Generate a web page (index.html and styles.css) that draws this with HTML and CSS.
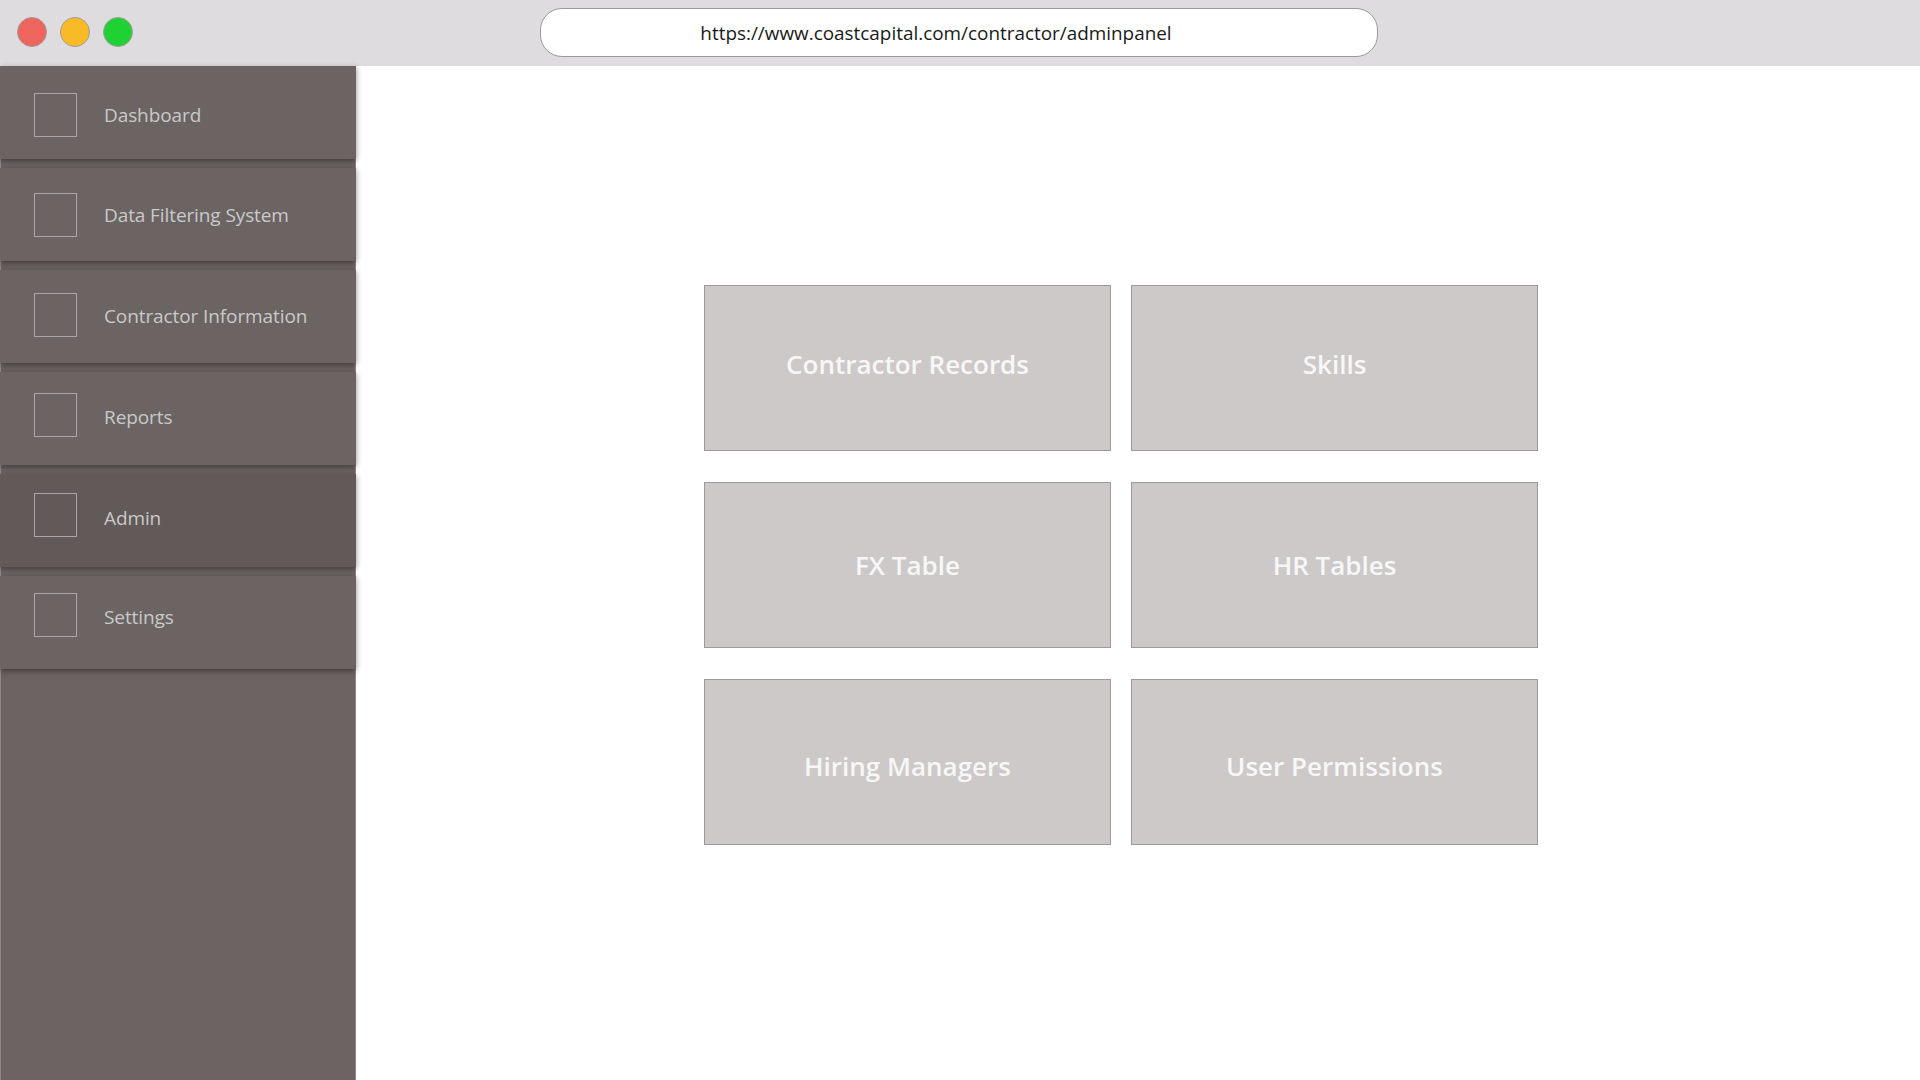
FILE: index.html
```html
<!DOCTYPE html>
<html lang="en">
<head>
<meta charset="utf-8">
<title>Admin Panel</title>
<link rel="stylesheet" href="styles.css">
</head>
<body>
<div class="window">
  <header class="topbar">
    <div class="lights">
      <span class="light red"></span>
      <span class="light yellow"></span>
      <span class="light green"></span>
    </div>
    <div class="urlbar">https://www.coastcapital.com/contractor/adminpanel</div>
  </header>
  <div class="body">
    <nav class="sidebar">
      <div class="nav-item"><span class="nav-icon"></span><span class="nav-label">Dashboard</span></div>
      <div class="nav-item"><span class="nav-icon"></span><span class="nav-label">Data Filtering System</span></div>
      <div class="nav-item"><span class="nav-icon"></span><span class="nav-label">Contractor Information</span></div>
      <div class="nav-item"><span class="nav-icon"></span><span class="nav-label">Reports</span></div>
      <div class="nav-item active"><span class="nav-icon"></span><span class="nav-label">Admin</span></div>
      <div class="nav-item"><span class="nav-icon"></span><span class="nav-label">Settings</span></div>
    </nav>
    <main class="content">
      <div class="tiles">
        <div class="tile up">Contractor Records</div>
        <div class="tile up">Skills</div>
        <div class="tile">FX Table</div>
        <div class="tile">HR Tables</div>
        <div class="tile down">Hiring Managers</div>
        <div class="tile down">User Permissions</div>
      </div>
    </main>
  </div>
</div>
</body>
</html>
```
FILE: styles.css
```css
* { box-sizing: border-box; }
html, body {
  margin: 0;
  padding: 0;
  width: 1920px;
  height: 1080px;
  overflow: hidden;
  background: #ffffff;
  font-family: "Open Sans", "Noto Sans", sans-serif;
}
.window {
  display: flex;
  flex-direction: column;
  height: 1080px;
}
.topbar {
  height: 66px;
  flex: 0 0 66px;
  background: #dedcdf;
  display: flex;
  align-items: flex-start;
}
.lights {
  display: flex;
  gap: 13px;
  padding-left: 17px;
  padding-top: 17px;
}
.light {
  width: 30px;
  height: 30px;
  border-radius: 50%;
  border: 1px solid #a39d9b;
  display: block;
}
.red { background: #f0655e; }
.yellow { background: #f8bb27; }
.green { background: #1fd233; }
.urlbar {
  margin-left: 407px;
  margin-top: 8px;
  width: 838px;
  height: 49px;
  padding-right: 46px;
  background: #ffffff;
  border: 1px solid #9a9a9a;
  border-radius: 22px;
  display: flex;
  align-items: center;
  justify-content: center;
  font-size: 18.9px;
  color: #1a1a1a;
}
.body {
  flex: 1;
  display: flex;
  min-height: 0;
}
.sidebar {
  width: 356px;
  flex: 0 0 356px;
  background: #6b6462;
  border-right: 1px solid #8c8888;
  border-left: 1px solid #8c8888;
  display: flex;
  flex-direction: column;
  gap: 9px;
}
.nav-item {
  height: 93px;
  margin-left: -1px;
  margin-right: -1px;
  background: #6b6462;
  display: flex;
  align-items: flex-start;
  padding-top: 27px;
  box-shadow: 0 3px 5px rgba(0, 0, 0, 0.28), 2px 0 5px rgba(0, 0, 0, 0.12);
}
.nav-item:nth-child(2) { padding-top: 25px; }
.nav-item:nth-child(3) { padding-top: 23px; }
.nav-item:nth-child(4) { padding-top: 21px; }
.nav-item:nth-child(5) { padding-top: 19px; }
.nav-item:nth-child(6) { padding-top: 17px; }
.nav-item.active { background: #615a58; }
.nav-icon {
  width: 43px;
  height: 44px;
  margin-left: 34px;
  border: 1px solid #a8a6a6;
  flex: 0 0 auto;
}
.nav-label {
  margin-left: 27px;
  color: #c9c9ca;
  font-size: 19px;
  line-height: 44px;
  letter-spacing: -0.1px;
}
.nav-item:nth-child(3) .nav-label { margin-top: 1px; }
.nav-item:nth-child(4) .nav-label { margin-top: 2px; }
.nav-item:nth-child(5) .nav-label { margin-top: 3px; }
.nav-item:nth-child(6) .nav-label { margin-top: 2px; }
.content {
  flex: 1;
  padding-top: 219px;
  padding-left: 348px;
}
.tiles {
  display: grid;
  grid-template-columns: 407px 407px;
  grid-auto-rows: 166px;
  column-gap: 20px;
  row-gap: 31px;
}
.tile {
  background: #cdc9c8;
  border: 1px solid #9b9a9c;
  display: flex;
  align-items: center;
  justify-content: center;
  color: #f7f7f7;
  font-size: 26px;
  font-weight: 600;
  padding-bottom: 0;
}
.tile.up { padding-bottom: 8px; }
.tile.down { padding-bottom: 0; padding-top: 8px; }
```
